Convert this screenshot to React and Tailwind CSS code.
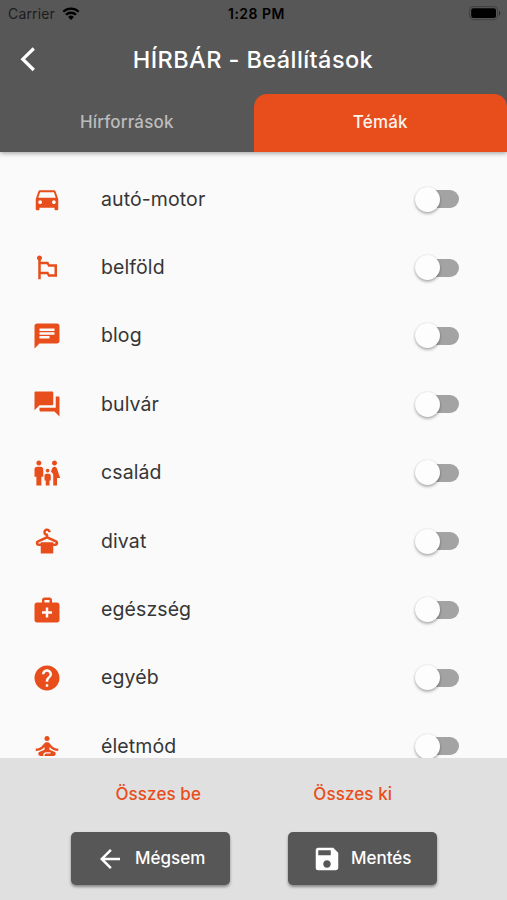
import React, { useState } from 'react';
import {
  MdArrowBack,
  MdChat,
  MdDirectionsCar,
  MdDryCleaning,
  MdEmojiFlags,
  MdFamilyRestroom,
  MdForum,
  MdHelp,
  MdMedicalServices,
  MdSave,
  MdSelfImprovement
} from 'react-icons/md';

const topics = [
  { id: 'auto', label: 'autó-motor', icon: MdDirectionsCar },
  { id: 'belfold', label: 'belföld', icon: MdEmojiFlags },
  { id: 'blog', label: 'blog', icon: MdChat },
  { id: 'bulvar', label: 'bulvár', icon: MdForum },
  { id: 'csalad', label: 'család', icon: MdFamilyRestroom },
  { id: 'divat', label: 'divat', icon: MdDryCleaning },
  { id: 'egeszseg', label: 'egészség', icon: MdMedicalServices },
  { id: 'egyeb', label: 'egyéb', icon: MdHelp },
  { id: 'eletmod', label: 'életmód', icon: MdSelfImprovement }
];

const StatusBar = () => (
  <div className="h-[27px] pl-2 pr-1.5 grid grid-cols-3 items-center text-black">
    <div className="flex items-center gap-[7px]">
      <span className="text-[14px] tracking-[0.15px] text-[#1c1c1c]">Carrier</span>
      <svg width="18" height="13" viewBox="0 0 18 13" fill="none" stroke="currentColor" strokeWidth="2.3">
        <path d="M1.3 4.8a11 11 0 0 1 15.4 0" />
        <path d="M4 7.8a7.1 7.1 0 0 1 10 0" />
        <path d="M6.1 10a4.1 4.1 0 0 1 5.8 0L9 12.9z" fill="currentColor" stroke="none" />
      </svg>
    </div>
    <span className="text-[14px] font-semibold text-center tracking-[0.5px] pl-1">1:28 PM</span>
    <svg className="justify-self-end" width="32" height="15" viewBox="0 0 32 15">
      <rect x="0.6" y="0.6" width="28" height="13" rx="3.5" fill="none" stroke="#404040" />
      <rect x="2.2" y="2.2" width="24.8" height="9.8" rx="2" fill="#000" />
      <path d="M30 5v4.5c1.6-.6 1.6-3.9 0-4.5z" fill="#2b2b2b" />
    </svg>
  </div>
);

const Switch = ({ on, onToggle, label }) => (
  <button
    role="switch"
    aria-checked={on}
    aria-label={label}
    onClick={onToggle}
    className={`w-[44px] h-[26px] flex items-center ${on ? 'justify-end' : 'justify-start'}`}
  >
    <span className={`w-[41px] h-[18px] ml-[3px] flex items-center rounded-full ${on ? 'bg-[#f2a78d] justify-end' : 'bg-[#a3a3a3]'}`}>
      <span className="w-[25px] h-[25px] -ml-[3px] shrink-0 rounded-full bg-[#fdfdfd] shadow-[0_2px_3px_rgba(0,0,0,0.28),0_0_2px_rgba(0,0,0,0.14)]" />
    </span>
  </button>
);

const App = () => {
  const [tab, setTab] = useState('topics');
  const [enabled, setEnabled] = useState({});

  const toggle = (id) => setEnabled({ ...enabled, [id]: !enabled[id] });
  const setAll = (value) =>
    setEnabled(Object.fromEntries(topics.map((topic) => [topic.id, value])));

  const tabClass = (id) =>
    tab === id ? 'bg-[#e84e1b] text-[#fff4ef] rounded-t-[13px]' : 'text-[#bcbcbc]';

  return (
    <div className="h-[900px] w-full flex flex-col overflow-hidden bg-[#fafafa] font-['Inter',sans-serif]">
      <header className="relative h-[152px] shrink-0 flex flex-col bg-[#575757] shadow-[0_1px_5px_rgba(0,0,0,0.4)]">
        <StatusBar />

        <div className="h-[66.5px] shrink-0 px-[13px] pb-[1.5px] flex items-center text-white">
          <button aria-label="Vissza">
            <svg width="29" height="29" viewBox="0 0 29 29" fill="none" stroke="currentColor" strokeWidth="3.2">
              <path d="M20.8 3.5 9.8 14.2 20.8 25" />
            </svg>
          </button>
          <h1 className="flex-1 pr-[30px] text-center text-[23.5px] font-medium tracking-[0.42px]">
            HÍRBÁR - Beállítások
          </h1>
        </div>

        {/* Tabs */}
        <div className="flex-1 grid grid-cols-2 text-[17px] font-medium tracking-[0.15px]">
          <button onClick={() => setTab('sources')} className={`pb-px ${tabClass('sources')}`}>
            Hírforrások
          </button>
          <button onClick={() => setTab('topics')} className={`pb-px ${tabClass('topics')}`}>
            Témák
          </button>
        </div>
      </header>

      <main className="flex-1 min-h-0 overflow-hidden pt-[13px]">
        {topics.map((topic) => {
          const Icon = topic.icon;
          return (
            <div key={topic.id} className="h-[68.4px] pl-8 pr-[48px] flex items-center">
              <Icon size={30} className="text-[#e84e1b]" />
              <span className="flex-1 pl-[39px] text-[19.5px] text-[#363636] tracking-[0.1px]">{topic.label}</span>
              <Switch on={!!enabled[topic.id]} onToggle={() => toggle(topic.id)} label={topic.label} />
            </div>
          );
        })}
      </main>

      <footer className="h-[142px] shrink-0 bg-[#e0e0e0]">
        <div className="h-[74px] pl-[61px] pr-[57px] pb-px grid grid-cols-2 text-[17px] font-medium text-[#e84e1b] tracking-[0.1px]">
          <button onClick={() => setAll(true)}>Összes be</button>
          <button onClick={() => setAll(false)}>Összes ki</button>
        </div>
        <div className="pl-[71px] flex gap-[58px] text-[17px] font-medium text-white tracking-[0]">
          <button className="w-[159px] h-[53px] flex items-center pl-[24px] gap-[10px] rounded-[5px] bg-[#575757] shadow-[0_2px_3px_rgba(0,0,0,0.4)]">
            <MdArrowBack size={30} />
            Mégsem
          </button>
          <button className="w-[149px] h-[53px] flex items-center pl-6 gap-[9px] rounded-[5px] bg-[#575757] shadow-[0_2px_3px_rgba(0,0,0,0.4)]">
            <MdSave size={30} />
            Mentés
          </button>
        </div>
      </footer>
    </div>
  );
};

export default App;
